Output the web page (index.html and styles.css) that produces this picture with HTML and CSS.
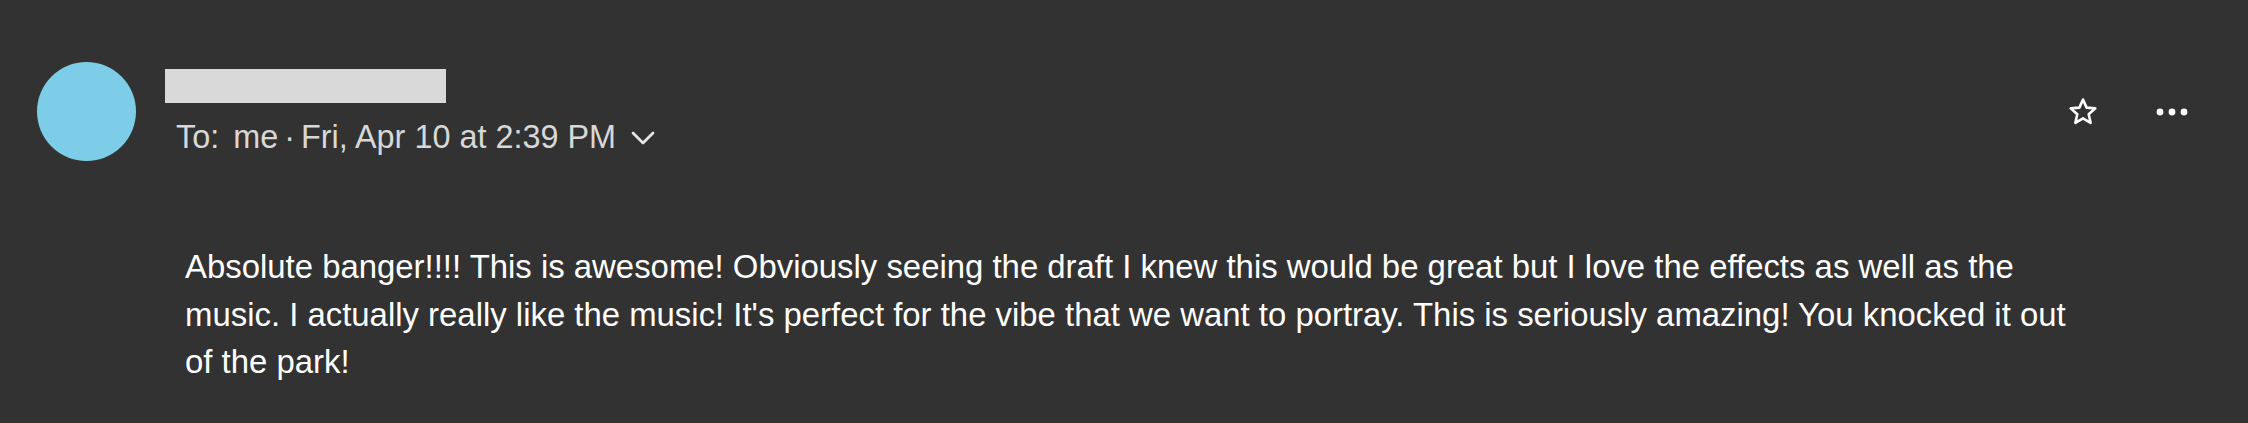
FILE: index.html
```html
<!DOCTYPE html>
<html lang="en">
<head>
<meta charset="UTF-8">
<meta name="viewport" content="width=device-width, initial-scale=1.0">
<title>Message</title>
<link rel="stylesheet" href="styles.css">
</head>
<body>

<div class="mail">
    <div class="header">
        <div class="avatar"></div>
        <div class="sender">
            <div class="name-bar"></div>
            <div class="meta">
                <span class="to">To:</span>
                <span>me</span>
                <span class="sep">&middot;</span>
                <span>Fri, Apr 10 at 2:39 PM</span>
                <svg class="chevron" width="24" height="14" viewBox="0 0 24 14">
                    <path d="M2 2 L12 12 L22 2" fill="none" stroke="#e6e6e6" stroke-width="2.8" stroke-linecap="round" stroke-linejoin="round"/>
                </svg>
            </div>
        </div>
        <div class="actions">
            <svg class="star" width="32" height="32" viewBox="0 0 32 32">
                <path d="M16 3.5 L19.6 11.6 L28.3 12.4 L21.7 18.3 L23.6 26.9 L16 22.4 L8.4 26.9 L10.3 18.3 L3.7 12.4 L12.4 11.6 Z" fill="none" stroke="#fff" stroke-width="2.6" stroke-linejoin="round"/>
            </svg>
            <svg class="dots" width="32" height="12" viewBox="0 0 32 12">
                <circle cx="4" cy="6" r="3.4" fill="#fff"/>
                <circle cx="16" cy="6" r="3.4" fill="#fff"/>
                <circle cx="28" cy="6" r="3.4" fill="#fff"/>
            </svg>
        </div>
    </div>

    <p class="message">Absolute banger!!!! This is awesome! Obviously seeing the draft I knew this would be great but I love the effects as well as the music. I actually really like the music! It's perfect for the vibe that we want to portray. This is seriously amazing! You knocked it out of the park!</p>
</div>

</body>
</html>
```

FILE: styles.css
```css
body {
    margin: 0;
    padding: 0;
    background-color: #323232;
    font-family: "Liberation Sans", Arial, sans-serif;
    color: #fff;
}
.mail {
    height: 423px;
    overflow: hidden;
}
.header {
    display: flex;
    align-items: flex-start;
    padding: 62px 60px 0 37px;
}
.avatar {
    width: 99px;
    height: 99px;
    border-radius: 50%;
    background-color: #7ecde8;
    flex-shrink: 0;
}
.sender {
    margin-left: 29px;
    padding-top: 7px;
}
.name-bar {
    width: 281px;
    height: 34px;
    background-color: #d9d9d9;
}
.meta {
    margin-top: 16px;
    padding-left: 11px;
    display: flex;
    align-items: center;
    font-size: 32.4px;
    line-height: 36px;
    color: #d8d8d8;
}
.meta .to {
    margin-right: 14px;
}
.meta .sep {
    margin: 0 6px;
}
.chevron {
    margin-left: 15px;
    margin-top: 2px;
}
.actions {
    margin-left: auto;
    margin-top: 34px;
    display: flex;
    align-items: center;
    gap: 57px;
}
.message {
    margin: 82px 0 0 0;
    padding: 0 180px 0 185px;
    font-size: 32.9px;
    line-height: 47.5px;
    color: #fff;
}
```
